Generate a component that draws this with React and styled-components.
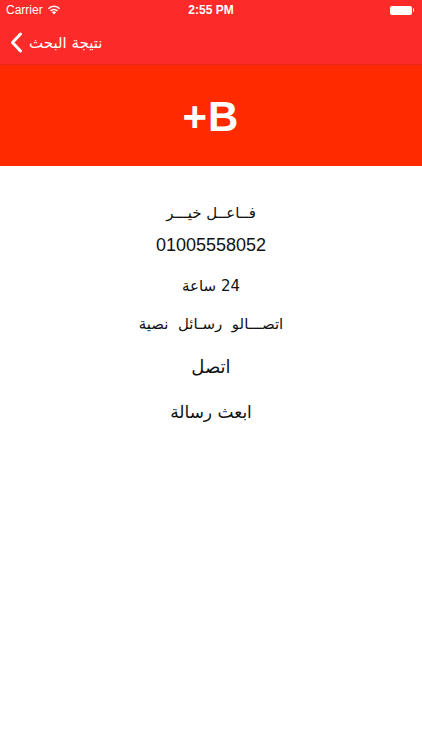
import React from 'react';
import styled, { createGlobalStyle } from 'styled-components';

const GlobalStyle = createGlobalStyle`
  html, body {
    margin: 0;
    padding: 0;
    background: #fff;
  }
  body {
    font-family: "Liberation Sans", Arial, sans-serif;
  }
`;

const Screen = styled.div`
  width: 422px;
  height: 750px;
  display: flex;
  flex-direction: column;
  background: #fff;
  overflow: hidden;
`;

const Header = styled.div`
  background: #fd2a2a;
  color: #fff;
  border-bottom: 1px solid #e8241e;
`;

const StatusBar = styled.div`
  height: 20px;
  display: grid;
  grid-template-columns: 1fr auto 1fr;
  align-items: center;
  padding: 0 6px;
  font-size: 12px;
  font-family: "Liberation Sans", Arial, sans-serif;
`;

const Carrier = styled.div`
  display: flex;
  align-items: center;
  gap: 4px;
`;

const Clock = styled.div`
  font-weight: bold;
`;

const Battery = styled.div`
  justify-self: end;
  display: flex;
  align-items: center;
  margin-right: 2px;
`;

const BatteryBody = styled.div`
  width: 22px;
  height: 9px;
  border-radius: 2px;
  background: #fff;
`;

const BatteryTip = styled.div`
  width: 1.5px;
  height: 4px;
  margin-left: 1px;
  background: #fff;
  border-radius: 0 1px 1px 0;
`;

const NavBar = styled.div`
  height: 44px;
  display: flex;
  align-items: center;
  padding-left: 10px;
  gap: 6px;
`;

const BackLabel = styled.span`
  font-family: "DejaVu Sans", "Noto Sans", sans-serif;
  font-size: 15px;
  margin-top: 2px;
`;

const Banner = styled.div`
  height: 101px;
  box-sizing: border-box;
  padding-top: 3px;
  background: #ff2a00;
  display: flex;
  align-items: center;
  justify-content: center;
  color: #fff;
  font-family: "Liberation Sans", Arial, sans-serif;
  font-weight: bold;
  font-size: 42px;
  letter-spacing: 1px;
`;

const Details = styled.div`
  display: flex;
  flex-direction: column;
  align-items: center;
  padding-top: 35px;
`;

const Line = styled.div`
  direction: ${(p) => (p.$ltr ? 'ltr' : 'rtl')};
  font-family: ${(p) => (p.$ltr ? '"Liberation Sans", Arial, sans-serif' : '"DejaVu Sans", "Noto Sans", sans-serif')};
  font-size: ${(p) => p.$size || 15}px;
  color: #111;
  height: ${(p) => p.$h}px;
  line-height: 24px;
  white-space: pre;
`;

function WifiIcon() {
  return (
    <svg width="14" height="10" viewBox="0 0 14 10">
      <path d="M7 9.5 L4.9 7.2 A3 3 0 0 1 9.1 7.2 Z" fill="#fff" />
      <path d="M3.6 5.9 A4.8 4.8 0 0 1 10.4 5.9" stroke="#fff" strokeWidth="1.5" fill="none" />
      <path d="M1.4 3.7 A7.8 7.8 0 0 1 12.6 3.7" stroke="#fff" strokeWidth="1.5" fill="none" />
    </svg>
  );
}

function Chevron() {
  return (
    <svg width="13" height="21" viewBox="0 0 13 21">
      <path d="M10.5 2 L2.5 10.5 L10.5 19" stroke="#fff" strokeWidth="3" fill="none" strokeLinecap="round" strokeLinejoin="round" />
    </svg>
  );
}

const details = [
  { text: 'فــاعــل خيـــر', h: 32 },
  { text: '01005558052', h: 41, ltr: true, size: 18 },
  { text: '24 ساعة', h: 38 },
  { text: 'اتصـــالو  رسـائل  نصية', h: 43 },
  { text: 'اتصل', h: 45, size: 18 },
  { text: 'ابعث رسالة', h: 40, size: 17 },
];

export default function App() {
  return (
    <Screen>
      <GlobalStyle />
      <Header>
        <StatusBar>
          <Carrier>
            Carrier
            <WifiIcon />
          </Carrier>
          <Clock>2:55 PM</Clock>
          <Battery>
            <BatteryBody />
            <BatteryTip />
          </Battery>
        </StatusBar>
        <NavBar>
          <Chevron />
          <BackLabel>نتيجة البحث</BackLabel>
        </NavBar>
      </Header>
      <Banner>+B</Banner>
      <Details>
        {details.map((d) => (
          <Line key={d.text} $ltr={d.ltr} $size={d.size} $h={d.h}>
            {d.text}
          </Line>
        ))}
      </Details>
    </Screen>
  );
}
